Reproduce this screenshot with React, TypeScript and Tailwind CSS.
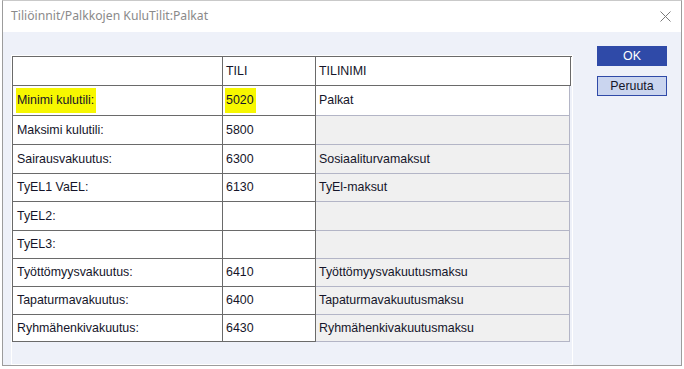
import React from "react";

type Row = { label: string; tili: string; nimi: string; h: string; mark?: boolean };

const rows: Row[] = [
  { label: "Minimi kulutili:", tili: "5020", nimi: "Palkat", h: "h-[30px]", mark: true },
  { label: "Maksimi kulutili:", tili: "5800", nimi: "", h: "h-[29px]" },
  { label: "Sairausvakuutus:", tili: "6300", nimi: "Sosiaaliturvamaksut", h: "h-[29px]" },
  { label: "TyEL1 VaEL:", tili: "6130", nimi: "TyEl-maksut", h: "h-[28px]" },
  { label: "TyEL2:", tili: "", nimi: "", h: "h-[29px]" },
  { label: "TyEL3:", tili: "", nimi: "", h: "h-[28px]" },
  { label: "Työttömyysvakuutus:", tili: "6410", nimi: "Työttömyysvakuutusmaksu", h: "h-[28px]" },
  { label: "Tapaturmavakuutus:", tili: "6400", nimi: "Tapaturmavakuutusmaksu", h: "h-[28px]" },
  { label: "Ryhmähenkivakuutus:", tili: "6430", nimi: "Ryhmähenkivakuutusmaksu", h: "h-[27px]" },
];

function Mark({ on, children }: { on?: boolean; children: React.ReactNode }) {
  if (!on) return <>{children}</>;
  return <span className="bg-[#f7f700] py-[3px] pl-[1px] pr-[2px] -ml-[1px]">{children}</span>;
}

function Table() {
  return (
    <div className="border border-white w-[562px]">
      <div className="border-l border-t border-[#6a6a6a] text-[12.4px] text-[#15152a] [font-family:'Liberation_Sans',Arial,sans-serif]">
        <div className="flex h-[29px] bg-white">
          <div className="w-[210px] border-r border-b border-[#6a6a6a]" />
          <div className="w-[93px] border-r border-b border-[#6a6a6a] flex items-center pl-[3px] pt-[1px]">TILI</div>
          <div className="w-[255px] border-r border-b border-[#6a6a6a] flex items-center pl-[3px] pt-[1px]">TILINIMI</div>
        </div>
        {rows.map((r, i) => (
          <div key={i} className={`flex ${r.h}`}>
            <div className="w-[210px] bg-white border-r border-b border-[#6a6a6a] flex items-center pl-[4px]">
              <Mark on={r.mark}>{r.label}</Mark>
            </div>
            <div className="w-[93px] bg-white border-r border-b border-[#6a6a6a] flex items-center pl-[3px]">
              <Mark on={r.mark}>{r.tili}</Mark>
            </div>
            <div
              className={`w-[254px] border-r border-b border-[#b3b5c6] flex items-center pl-[3px] ${
                i === 0 ? "bg-white" : "bg-[#f0f0f0]"
              }`}
            >
              {r.nimi}
            </div>
          </div>
        ))}
      </div>
    </div>
  );
}

export default function App() {
  return (
    <div className="w-[684px] h-[369px] bg-white flex pl-[2px] pr-[2px] pb-[3px] overflow-hidden">
      <div className="flex-1 flex flex-col border border-t-[#c9c9c9] border-[#9c9c9c]">
        <div className="h-[31px] bg-white flex items-center justify-between pl-[8px] pr-[10px]">
          <span className="text-[12.2px] text-[#8a8a8a] [font-family:'Noto_Sans',sans-serif]">
            Tiliöinnit/Palkkojen KuluTilit:Palkat
          </span>
          <svg width="11" height="11" viewBox="0 0 11 11" className="mb-[1px]">
            <path d="M0.5 0.5 L10.5 10.5 M10.5 0.5 L0.5 10.5" stroke="#7a7a7a" strokeWidth="1" />
          </svg>
        </div>
        <div className="flex-1 bg-[#eef1f9] flex pl-[8px] pt-[23px]">
          <Table />
          <div className="ml-[24px] mt-[-9px] flex flex-col gap-[10px] text-[12.4px] [font-family:'Liberation_Sans',Arial,sans-serif]">
            <button className="w-[70px] h-[20px] bg-[#2f4aa8] text-white flex items-center justify-center">OK</button>
            <button className="w-[70px] h-[20px] bg-[#cad5ef] border border-[#2f4aa8] text-[#15152a] flex items-center justify-center">
              Peruuta
            </button>
          </div>
        </div>
      </div>
    </div>
  );
}
